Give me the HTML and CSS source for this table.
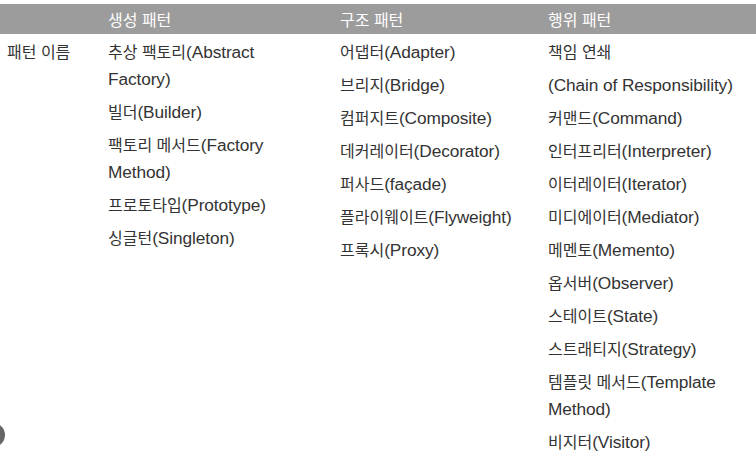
FILE: index.html
```html
<!DOCTYPE html>
<html lang="ko">
<head>
<meta charset="utf-8">
<title>디자인 패턴</title>
<link rel="stylesheet" href="styles.css">
</head>
<body>
<div class="table">
  <div class="row head">
    <div class="cell"></div>
    <div class="cell">생성 패턴</div>
    <div class="cell">구조 패턴</div>
    <div class="cell">행위 패턴</div>
  </div>
  <div class="row body">
    <div class="cell"><p>패턴 이름</p></div>
    <div class="cell">
      <p>추상 팩토리<span class="en" lang="en">(Abstract</span><br><span class="en" lang="en">Factory)</span></p>
      <p>빌더<span class="en" lang="en">(Builder)</span></p>
      <p>팩토리 메서드<span class="en" lang="en">(Factory</span><br><span class="en" lang="en">Method)</span></p>
      <p>프로토타입<span class="en" lang="en">(Prototype)</span></p>
      <p>싱글턴<span class="en" lang="en">(Singleton)</span></p>
    </div>
    <div class="cell">
      <p>어댑터<span class="en" lang="en">(Adapter)</span></p>
      <p>브리지<span class="en" lang="en">(Bridge)</span></p>
      <p>컴퍼지트<span class="en" lang="en">(Composite)</span></p>
      <p>데커레이터<span class="en" lang="en">(Decorator)</span></p>
      <p>퍼사드<span class="en" lang="en">(façade)</span></p>
      <p>플라이웨이트<span class="en" lang="en">(Flyweight)</span></p>
      <p>프록시<span class="en" lang="en">(Proxy)</span></p>
    </div>
    <div class="cell">
      <p>책임 연쇄</p>
      <p><span class="en" lang="en">(Chain of Responsibility)</span></p>
      <p>커맨드<span class="en" lang="en">(Command)</span></p>
      <p>인터프리터<span class="en" lang="en">(Interpreter)</span></p>
      <p>이터레이터<span class="en" lang="en">(Iterator)</span></p>
      <p>미디에이터<span class="en" lang="en">(Mediator)</span></p>
      <p>메멘토<span class="en" lang="en">(Memento)</span></p>
      <p>옵서버<span class="en" lang="en">(Observer)</span></p>
      <p>스테이트<span class="en" lang="en">(State)</span></p>
      <p>스트래티지<span class="en" lang="en">(Strategy)</span></p>
      <p>템플릿 메서드<span class="en" lang="en">(Template</span><br><span class="en" lang="en">Method)</span></p>
      <p>비지터<span class="en" lang="en">(Visitor)</span></p>
    </div>
  </div>
</div>
<div class="dot"></div>
</body>
</html>
```
FILE: styles.css
```css
html, body {
  margin: 0;
  padding: 0;
  background: #ffffff;
}
body {
  font-family: "Liberation Sans", "Noto Sans CJK KR", sans-serif;
  color: #333333;
  font-size: 16px;
  overflow: hidden;
  position: relative;
  height: 451px;
}
.table {
  padding-top: 4px;
}
.row {
  display: grid;
  grid-template-columns: 101px 232px 208px 1fr;
  padding-left: 7px;
}
.head {
  background: #9c9c9c;
  color: #ffffff;
  height: 30px;
  align-items: center;
  font-size: 16px;
}
.body {
  padding-top: 5px;
}
.body .cell {
  white-space: nowrap;
}
p {
  margin: 0 0 6px 0;
  line-height: 27px;
}
.en {
  font-size: 17.3px;
  letter-spacing: -0.1px;
}
.dot {
  position: absolute;
  left: -19px;
  top: 423px;
  width: 24px;
  height: 24px;
  border-radius: 50%;
  background: #666666;
}
```
